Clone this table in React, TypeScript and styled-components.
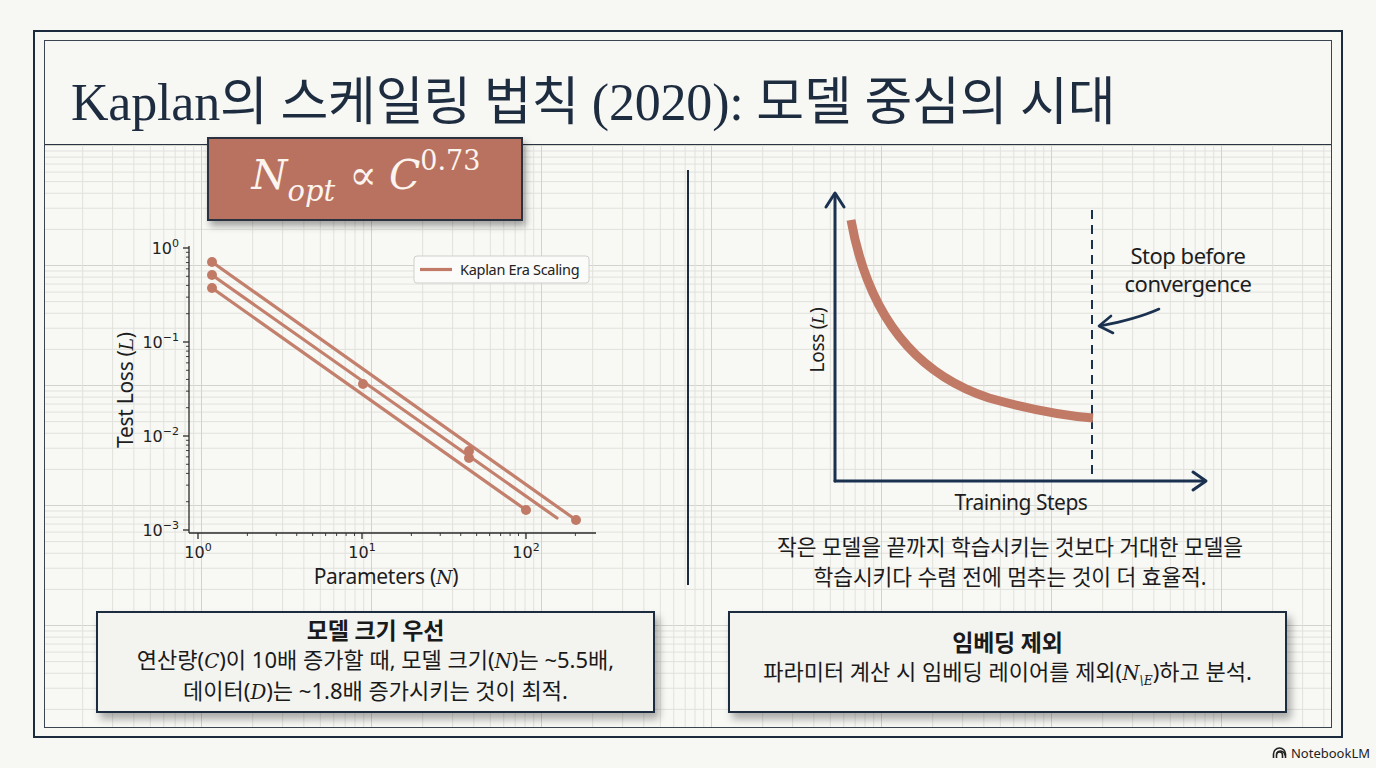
import React from 'react';
import styled, { createGlobalStyle } from 'styled-components';

const NAVY = '#1d2b3e';
const RUST = '#c17a66';
const SANS = `"Noto Sans", "Noto Sans CJK KR", sans-serif`;
const SERIF = `"Liberation Serif", "Noto Sans CJK KR", serif`;
const MATH = `"DejaVu Serif", "Liberation Serif", serif`;

// semi-log graph paper: log-spaced lines inside each decade
const DECADE_X = 170;
const DECADE_Y = 120;
const OFFSET_X = 156;
const logs = [1, 2, 3, 4, 5, 6, 7, 8, 9].map((k) => Math.log10(k));

const gridLayers = [
    ...logs.map((l, i) => ({
        img: `linear-gradient(to right, ${i === 0 ? '#d3d3ce' : '#e1e1dc'} 0 1px, transparent 1px)`,
        size: `${DECADE_X}px 100%`,
        pos: `${(OFFSET_X + l * DECADE_X) % DECADE_X}px 0`,
    })),
    ...logs.map((l, i) => ({
        img: `linear-gradient(to bottom, ${i === 0 ? '#d3d3ce' : '#e1e1dc'} 0 1px, transparent 1px)`,
        size: `100% ${DECADE_Y}px`,
        pos: `0 ${((1 - l) * DECADE_Y) % DECADE_Y}px`,
    })),
];

const GlobalStyle = createGlobalStyle`
    html, body {
        margin: 0;
        padding: 0;
        background: #f7f7f4;
    }
    body {
        font-family: ${SANS};
        color: #1a1a1a;
    }
`;

const Page = styled.div`
    width: 1376px;
    height: 768px;
    padding-top: 30px;
    box-sizing: border-box;
    background: #f7f7f4;
    display: flex;
    flex-direction: column;
    overflow: hidden;
`;

const OuterFrame = styled.div`
    margin-left: 33px;
    width: 1310px;
    height: 708px;
    box-sizing: border-box;
    border: 2px solid ${NAVY};
    padding: 8px 9px 8px 9px;
    display: flex;
`;

const InnerFrame = styled.div`
    flex: 1;
    border: 1.5px solid #3b4552;
    display: flex;
    flex-direction: column;
`;

const TitleBar = styled.header`
    height: 104px;
    flex-shrink: 0;
    border-bottom: 1.5px solid #2b3542;
    display: flex;
    align-items: center;
    padding: 10px 0 0 26px;
    box-sizing: border-box;
`;

const Title = styled.h1`
    margin: 0;
    font-family: ${SERIF};
    font-weight: 400;
    font-size: 52px;
    letter-spacing: -0.2px;
    color: #1e2c40;
`;

const Content = styled.main`
    flex: 1;
    display: flex;
    flex-direction: column;
    background-color: #f8f8f5;
    background-image: ${gridLayers.map((g) => g.img).join(', ')};
    background-size: ${gridLayers.map((g) => g.size).join(', ')};
    background-position: ${gridLayers.map((g) => g.pos).join(', ')};
`;

const Upper = styled.div`
    height: 466px;
    display: grid;
    grid-template-columns: 642px 2px 1fr;
`;

const LeftPanel = styled.section`
    display: flex;
    flex-direction: column;
`;

const FormulaBox = styled.div`
    margin: -8px 0 0 162px;
    width: 316px;
    height: 84px;
    box-sizing: border-box;
    background: #b8725f;
    border: 2px solid #2a3240;
    box-shadow: 3px 5px 7px rgba(0, 0, 0, 0.35);
    display: flex;
    align-items: center;
    justify-content: center;
    padding: 0 0 8px 2px;
    position: relative;
    z-index: 1;
`;

const Formula = styled.span`
    color: #fbf4ef;
    font-family: ${MATH};
    font-style: italic;
    font-size: 41px;
    line-height: 1;
    white-space: nowrap;

    sub {
        font-size: 29px;
        vertical-align: -12px;
        line-height: 0;
    }
    sup {
        font-size: 27px;
        font-style: normal;
        vertical-align: 19px;
        line-height: 0;
    }
`;

const Prop = styled.span`
    font-style: normal;
    margin: 0 12px 0 14px;
`;

const ChartSvg = styled.svg<{ $top: number; $left: number }>`
    display: block;
    margin: ${(p) => p.$top}px 0 0 ${(p) => p.$left}px;
    overflow: visible;
`;

const Divider = styled.div`
    background: ${NAVY};
    margin-top: 25px;
    height: 415px;
`;

const RightPanel = styled.section`
    display: flex;
    flex-direction: column;
`;

const Caption = styled.p`
    margin: 12px 0 0 0;
    font-size: 21.5px;
    line-height: 30px;
    letter-spacing: -0.1px;
    text-align: center;
    color: #1b1b1b;
`;

const Lower = styled.div`
    display: flex;
    gap: 73px;
    padding-left: 51px;
`;

const NoteBox = styled.div<{ $w: number }>`
    width: ${(p) => p.$w}px;
    height: 102px;
    box-sizing: border-box;
    background: #f3f3f0;
    border: 2px solid ${NAVY};
    box-shadow: 4px 6px 8px rgba(0, 0, 0, 0.32);
    display: flex;
    flex-direction: column;
    justify-content: center;
    align-items: center;
    text-align: center;
    padding-bottom: 2px;
`;

const NoteTitle = styled.div`
    font-weight: 700;
    font-size: 23px;
    line-height: 30px;
    letter-spacing: -0.2px;
`;

const NoteText = styled.div`
    font-size: 22px;
    line-height: 29px;
    letter-spacing: 0;
    white-space: nowrap;
`;

const MathVar = styled.i`
    font-family: ${MATH};
    font-size: 0.9em;
    letter-spacing: 0;
    sub {
        font-size: 0.62em;
    }
`;

const Footer = styled.footer`
    flex: 1;
    display: flex;
    align-items: center;
    justify-content: flex-end;
    padding: 0 6px 0 0;
    gap: 4px;
    font-size: 13px;
    color: #222;
`;

// ---------- left chart (log-log) ----------
const Y0 = 248;
const YD = 94;
const X0 = 197;
const XD = 164;
const AX_X = 188;
const AX_Y = 533;

const yTicks = [0, 1, 2, 3];
const xTicks = [0, 1, 2];

const TickLabel: React.FC<{ x: number; y: number; exp: string; anchor: 'end' | 'middle' }> = ({ x, y, exp, anchor }) => (
    <text x={x} y={y} textAnchor={anchor} fontFamily='"DejaVu Sans", sans-serif' fontSize={16} fill='#222'>
        10<tspan dy={-7} fontSize={11}>{exp}</tspan>
    </text>
);

const series = [
    { from: [211, 262], to: [575, 520], dots: [[211, 262], [575, 520]] },
    { from: [211, 275], to: [556, 518], dots: [[211, 275], [362, 384], [468, 451]] },
    { from: [211, 288], to: [525, 510], dots: [[211, 288], [468, 458], [525, 510]] },
];

const LossChart: React.FC = () => {
    const minorY: number[] = [];
    for (let d = 0; d < 3; d++) {
        for (let m = 2; m <= 9; m++) minorY.push(Y0 + (d + 1) * YD - Math.log10(m) * YD);
    }
    const minorX: number[] = [];
    for (let d = 0; d < 3; d++) {
        for (let m = 2; m <= 9; m++) {
            const x = X0 + d * XD + Math.log10(m) * XD;
            if (x < 594) minorX.push(x);
        }
    }
    return (
        <ChartSvg $top={11} $left={56} width={500} height={360} viewBox='100 232 500 360'>
            <g stroke='#2a2a2a' strokeWidth={1.3}>
                <line x1={AX_X} y1={Y0 - 2} x2={AX_X} y2={AX_Y} />
                <line x1={AX_X} y1={AX_Y} x2={595} y2={AX_Y} />
                {yTicks.map((t) => <line key={t} x1={AX_X - 6} x2={AX_X} y1={Y0 + t * YD} y2={Y0 + t * YD} />)}
                {xTicks.map((t) => <line key={t} y1={AX_Y} y2={AX_Y + 6} x1={X0 + t * XD} x2={X0 + t * XD} />)}
                {minorY.map((y, i) => <line key={`my${i}`} x1={AX_X - 3} x2={AX_X} y1={y} y2={y} strokeWidth={0.9} />)}
                {minorX.map((x, i) => <line key={`mx${i}`} y1={AX_Y} y2={AX_Y + 3} x1={x} x2={x} strokeWidth={0.9} />)}
            </g>
            {yTicks.map((t) => (
                <TickLabel key={t} x={178} y={Y0 + t * YD + 6} exp={t === 0 ? '0' : `−${t}`} anchor='end' />
            ))}
            {xTicks.map((t) => (
                <TickLabel key={t} x={X0 + t * XD} y={558} exp={String(t)} anchor='middle' />
            ))}
            <text x={125} y={390} transform='rotate(-90 125 390)' dy={7} textAnchor='middle' fontFamily={SANS} fontSize={21} letterSpacing={-0.3} fill='#1d1d1d'>
                Test Loss (<tspan fontFamily={MATH} fontStyle='italic' fontSize={19}>L</tspan>)
            </text>
            <text x={385} y={584} textAnchor='middle' fontFamily={SANS} fontSize={21} letterSpacing={-0.3} fill='#1d1d1d'>
                Parameters (<tspan fontFamily={MATH} fontStyle='italic' fontSize={19}>N</tspan>)
            </text>
            <g stroke={RUST} strokeWidth={3.2} strokeLinecap='round' opacity={0.95}>
                {series.map((s, i) => (
                    <line key={i} x1={s.from[0]} y1={s.from[1]} x2={s.to[0]} y2={s.to[1]} />
                ))}
            </g>
            <g fill={RUST}>
                {series.flatMap((s, i) => s.dots.map(([x, y], j) => <circle key={`${i}-${j}`} cx={x} cy={y} r={5} />))}
            </g>
            <rect x={413} y={256} width={175} height={27} rx={3} fill='#fbfbf9' stroke='#cfcfcc' strokeWidth={1} />
            <line x1={419} y1={269.5} x2={451} y2={269.5} stroke={RUST} strokeWidth={3.2} />
            <text x={459} y={275} fontFamily={SANS} fontSize={14.5} letterSpacing={-0.3} fill='#222'>Kaplan Era Scaling</text>
        </ChartSvg>
    );
};

// ---------- right chart (training curve) ----------
const TrainingChart: React.FC = () => (
    <ChartSvg $top={35} $left={85} width={500} height={340} viewBox='775 180 500 340'>
        <g fill='none' stroke='#1b3150' strokeWidth={3} strokeLinecap='round' strokeLinejoin='round'>
            <path d='M836,481 L836,194' />
            <path d='M827,207 L836,193 L845,207' />
            <path d='M836,481 L1206,481' />
            <path d='M1194,472 L1207,481 L1194,490' />
            <path d='M1160,309 C1140,318 1122,322 1101,326' strokeWidth={2.6} />
            <path d='M1112,316 L1100,326 L1114,333' strokeWidth={2.6} />
        </g>
        <line x1={1093} y1={210} x2={1093} y2={481} stroke='#1b3150' strokeWidth={2} strokeDasharray='9 6' />
        <path d='M852,220 C870,320 920,375 990,398 C1040,412 1070,416 1094,418' fill='none' stroke={RUST} strokeWidth={9} />
        <text x={818} y={340} transform='rotate(-90 818 340)' dy={7} textAnchor='middle' fontFamily={SANS} fontSize={19} letterSpacing={-0.3} fill='#1d1d1d'>
            Loss (<tspan fontFamily={MATH} fontStyle='italic' fontSize={17}>L</tspan>)
        </text>
        <text x={1022} y={510} textAnchor='middle' fontFamily={SANS} fontSize={21} letterSpacing={-0.5} fill='#1d1d1d'>Training Steps</text>
        <g fontFamily={SANS} fontSize={22} letterSpacing={-0.5} fill='#1d1d1d' textAnchor='middle'>
            <text x={1189} y={264}>Stop before</text>
            <text x={1189} y={292}>convergence</text>
        </g>
    </ChartSvg>
);

const NotebookIcon: React.FC = () => (
    <svg width='15' height='12' viewBox='0 0 15 12' fill='none' stroke='#222' strokeWidth={1.6}>
        <path d='M1.5 11 V7 A6 6 0 0 1 13.5 7 V11' />
        <path d='M4.5 11 V8 A3 3 0 0 1 10.5 8 V11' />
        <path d='M4.5 6.5 A4.5 4.5 0 0 1 13 8.5' />
    </svg>
);

export default function App() {
    return (
        <>
            <GlobalStyle />
            <Page>
                <OuterFrame>
                    <InnerFrame>
                        <TitleBar>
                            <Title>Kaplan의 스케일링 법칙 (2020): 모델 중심의 시대</Title>
                        </TitleBar>
                        <Content>
                            <Upper>
                                <LeftPanel>
                                    <FormulaBox>
                                        <Formula>
                                            N<sub>opt</sub>
                                            <Prop>∝</Prop>
                                            C<sup>0.73</sup>
                                        </Formula>
                                    </FormulaBox>
                                    <LossChart />
                                </LeftPanel>
                                <Divider />
                                <RightPanel>
                                    <TrainingChart />
                                    <Caption>
                                        작은 모델을 끝까지 학습시키는 것보다 거대한 모델을
                                        <br />
                                        학습시키다 수렴 전에 멈추는 것이 더 효율적.
                                    </Caption>
                                </RightPanel>
                            </Upper>
                            <Lower>
                                <NoteBox $w={559}>
                                    <NoteTitle>모델 크기 우선</NoteTitle>
                                    <NoteText>
                                        연산량(<MathVar>C</MathVar>)이 10배 증가할 때, 모델 크기(<MathVar>N</MathVar>)는 ~5.5배,
                                    </NoteText>
                                    <NoteText>
                                        데이터(<MathVar>D</MathVar>)는 ~1.8배 증가시키는 것이 최적.
                                    </NoteText>
                                </NoteBox>
                                <NoteBox $w={559}>
                                    <NoteTitle>임베딩 제외</NoteTitle>
                                    <NoteText>
                                        파라미터 계산 시 임베딩 레이어를 제외(<MathVar>N<sub>\E</sub></MathVar>)하고 분석.
                                    </NoteText>
                                </NoteBox>
                            </Lower>
                        </Content>
                    </InnerFrame>
                </OuterFrame>
                <Footer>
                    <NotebookIcon />
                    NotebookLM
                </Footer>
            </Page>
        </>
    );
}
